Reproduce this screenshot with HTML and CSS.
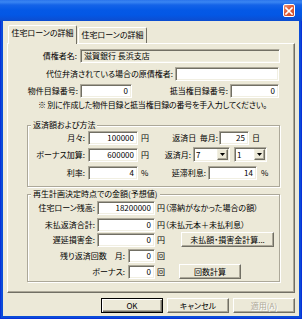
FILE: index.html
```html
<!DOCTYPE html>
<html lang="ja">
<head>
<meta charset="utf-8">
<title>住宅ローンの詳細</title>
<link rel="stylesheet" href="styles.css">
</head>
<body>
<div class="window">
  <div class="titlebar">
    <span class="close"><svg width="8" height="8" viewBox="0 0 8 8"><path d="M1 1L7 7M7 1L1 7" stroke="#fff" stroke-width="1.6" stroke-linecap="square"/></svg></span>
  </div>
  <div class="client">
    <div class="tabs">
      <div class="tab active">住宅ローンの詳細</div>
      <div class="tab">住宅ローンの詳細</div>
    </div>
    <div class="panel">
      <div class="row r1">
        <span class="lbl w69">債権者名:</span>
        <span class="edit ro ml3 w200">滋賀銀行 長浜支店</span>
      </div>
      <div class="row r2">
        <span class="lbl w165">代位弁済されている場合の原債権者:</span>
        <span class="edit ml2 w104"></span>
      </div>
      <div class="row r3">
        <span class="lbl w70">物件目録番号:</span>
        <span class="edit num ml2 w52">0</span>
        <span class="lbl w96">抵当権目録番号:</span>
        <span class="edit num ml2 w49">0</span>
      </div>
      <p class="note">※ 別に作成した物件目録と抵当権目録の番号を手入力してください。</p>

      <fieldset class="group g1">
        <legend>返済額および方法</legend>
        <div class="row">
          <span class="lbl w57">月々:</span>
          <span class="edit num ml3 w50">100000</span>
          <span class="unit">円</span>
          <span class="lbl w68">返済日&nbsp;&nbsp;毎月:</span>
          <span class="edit num ml1 w30">25</span>
          <span class="unit">日</span>
        </div>
        <div class="row gr2">
          <span class="lbl w57">ボーナス加算:</span>
          <span class="edit num ml3 w50">600000</span>
          <span class="unit">円</span>
          <span class="lbl w41">返済月:</span>
          <span class="combo ml2 w37"><span class="cval">7</span><span class="drop"><svg width="5" height="3" viewBox="0 0 5 3"><path d="M0 0H5L2.5 3Z" fill="#000"/></svg></span></span>
          <span class="combo ml4 w33"><span class="cval">1</span><span class="drop"><svg width="5" height="3" viewBox="0 0 5 3"><path d="M0 0H5L2.5 3Z" fill="#000"/></svg></span></span>
        </div>
        <div class="row gr3">
          <span class="lbl w57">利率:</span>
          <span class="edit num ml3 w50">4</span>
          <span class="unit">%</span>
          <span class="lbl w56">延滞利息:</span>
          <span class="edit num ml2 w49">14</span>
          <span class="unit ml4">%</span>
        </div>
      </fieldset>

      <fieldset class="group g2">
        <legend>再生計画決定時点での金額(予想値)</legend>
        <div class="row hr1">
          <span class="lbl w67">住宅ローン残高:</span>
          <span class="edit num ml2 w58">18200000</span>
          <span class="txt">円（滞納がなかった場合の額）</span>
        </div>
        <div class="row hr2">
          <span class="lbl w67">未払返済合計:</span>
          <span class="edit num ml2 w58">0</span>
          <span class="txt">円（未払元本＋未払利息）</span>
        </div>
        <div class="row hr3">
          <span class="lbl w67">遅延損害金:</span>
          <span class="edit num ml2 w58">0</span>
          <span class="txt">円</span>
          <button class="btn b-calc">未払額・損害金計算...</button>
        </div>
        <div class="row hr4">
          <span class="lbl w97">残り返済回数　月:</span>
          <span class="edit num ml3 w27">0</span>
          <span class="txt">回</span>
        </div>
        <div class="row hr5">
          <span class="lbl w97">ボーナス:</span>
          <span class="edit num ml3 w27">0</span>
          <span class="txt">回</span>
          <button class="btn b-count">回数計算</button>
        </div>
      </fieldset>
    </div>
    <div class="buttons">
      <button class="btn dlg default">OK</button>
      <button class="btn dlg">キャンセル</button>
      <button class="btn dlg disabled">適用(A)</button>
    </div>
  </div>
</div>
</body>
</html>
```

FILE: styles.css
```css
html, body {
  margin: 0;
  padding: 0;
  background: #ECE9D8;
}
body {
  font-family: "Noto Sans CJK JP", "Noto Sans", sans-serif;
  font-size: 8px;
  color: #000;
  font-feature-settings: "palt";
}
.window {
  width: 302px;
  height: 319px;
  display: flex;
  flex-direction: column;
  background: #0A4BD9;
  box-shadow: inset 1px 0 0 #0831D9, inset -1px 0 0 #0831D9, inset 0 -1px 0 #0831D9;
}
.titlebar {
  height: 21px;
  flex: none;
  box-sizing: border-box;
  display: flex;
  justify-content: flex-end;
  align-items: flex-start;
  padding: 4px 7px 0 0;
  background: linear-gradient(180deg, #2B74EC 0, #3A85F2 2px, #1463E8 5px, #0559E6 10px, #0357E5 15px, #0A50D6 19px, #0A4BD0 21px);
}
.close {
  width: 12px;
  height: 13px;
  box-sizing: border-box;
  border: 1px solid #fff;
  border-radius: 2px;
  background: linear-gradient(135deg, #F09A7C 0, #E2623E 40%, #CC4A24 100%);
  display: flex;
  align-items: center;
  justify-content: center;
}
.close svg { display: block; }
.client {
  flex: 1;
  margin: 0 3px 3px;
  background: #ECE9D8;
  padding: 4px 4px 0;
  display: flex;
  flex-direction: column;
}
.tabs {
  display: flex;
  align-items: flex-end;
  height: 18px;
  flex: none;
}
.tab {
  box-sizing: border-box;
  width: 69px;
  height: 16px;
  line-height: 14px;
  text-align: center;
  border: 1px solid;
  border-bottom: none;
  border-color: #fff #716F64 transparent #fff;
  border-radius: 2px 2px 0 0;
  background: #ECE9D8;
  white-space: nowrap;
}
.tab.active {
  margin-left: 1px;
  margin-right: 1px;
  width: 69px;
  height: 19px;
  line-height: 14px;
  margin-bottom: -1px;
  position: relative;
  z-index: 1;
}
.panel {
  box-sizing: border-box;
  height: 250px;
  flex: none;
  border: 1px solid;
  border-color: #fff #716F64 #716F64 #fff;
  box-shadow: inset -1px -1px 0 #ACA899;
  display: flex;
  flex-direction: column;
}
.row {
  display: flex;
  align-items: center;
  height: 15px;
  flex: none;
  white-space: nowrap;
}
.r1 { margin-top: 4px; }
.r2 { margin-top: 3px; }
.r3 { margin-top: 2px; }
.note {
  margin: 2px 0 0;
  padding-left: 30px;
  line-height: 10px;
  letter-spacing: -0.22px;
  white-space: nowrap;
}
.lbl {
  text-align: right;
  flex: none;
}
.edit {
  box-sizing: border-box;
  height: 14px;
  line-height: 12px;
  background: #fff;
  border: 1px solid;
  border-color: #ACA899 #fff #fff #ACA899;
  box-shadow: inset 1px 1px 0 #716F64, inset -1px -1px 0 #F1EFE2;
  padding: 0 3px;
  flex: none;
  overflow: hidden;
}
.edit.num { text-align: right; }
.edit.ro { background: #ECE9D8; text-align: left; }
.unit { margin-left: 3px; width: 9px; flex: none; }
.unit.ml4 { margin-left: 4px; }
.txt { margin-left: 2px; }

.w27 { width: 27px; } .w30 { width: 30px; } .w33 { width: 33px; }
.w37 { width: 37px; } .w41 { width: 41px; } .w49 { width: 49px; }
.w50 { width: 50px; } .w52 { width: 52px; } .w56 { width: 56px; }
.w57 { width: 57px; } .w58 { width: 58px; } .w67 { width: 67px; }
.w68 { width: 68px; } .w69 { width: 69px; } .w70 { width: 70px; }
.w96 { width: 96px; } .w97 { width: 97px; } .w104 { width: 104px; }
.w165 { width: 165px; } .w200 { width: 200px; }
.ml1 { margin-left: 1px; } .ml2 { margin-left: 2px; }
.ml3 { margin-left: 3px; } .ml4 { margin-left: 4px; }

.group {
  box-sizing: border-box;
  width: 253px;
  margin: 0 0 0 19px;
  padding: 0;
  border: 1px solid #ACA899;
  box-shadow: 1px 1px 0 #fff, inset 1px 1px 0 #fff;
  min-width: 0;
}
.group legend {
  margin-left: 3px;
  padding: 0 2px;
  line-height: 10px;
  background: #ECE9D8;
}
.g1 { margin-top: 10px; padding-bottom: 6px; }
.g2 { margin-top: 2px; padding-bottom: 2px; }
.gr2 { margin-top: 2px; }
.gr3 { margin-top: 3px; }
.hr1 { margin-top: 1px; }
.hr2 { margin-top: 2px; }
.hr4 { margin-top: 1px; }
.hr5 { margin-top: 1px; }

.combo {
  box-sizing: border-box;
  height: 15px;
  display: flex;
  align-items: stretch;
  background: #fff;
  border: 1px solid;
  border-color: #ACA899 #fff #fff #ACA899;
  box-shadow: inset 1px 1px 0 #716F64, inset -1px -1px 0 #F1EFE2;
  padding: 1px;
  flex: none;
}
.cval {
  flex: 1;
  line-height: 11px;
  padding-left: 1px;
}
.drop {
  box-sizing: border-box;
  width: 11px;
  background: #ECE9D8;
  border: 1px solid;
  border-color: #F1EFE2 #716F64 #716F64 #F1EFE2;
  box-shadow: inset -1px -1px 0 #ACA899;
  display: flex;
  align-items: center;
  justify-content: center;
}
.drop svg { display: block; }

.btn {
  box-sizing: border-box;
  height: 15px;
  padding: 0;
  font: inherit;
  font-feature-settings: "palt";
  line-height: 11px;
  color: #000;
  background: #ECE9D8;
  border: 1px solid;
  border-color: #fff #716F64 #716F64 #fff;
  box-shadow: inset -1px -1px 0 #ACA899;
  flex: none;
  white-space: nowrap;
}
.b-calc { margin-left: 16px; width: 93px; }
.b-count { margin-left: 14px; width: 62px; }
.buttons {
  display: flex;
  justify-content: flex-end;
  gap: 4px;
  margin-top: 5px;
}
.btn.dlg { width: 62px; }
.btn.default {
  border-color: #000;
  box-shadow: inset 1px 1px 0 #fff, inset -1px -1px 0 #716F64, inset -2px -2px 0 #ACA899;
}
.btn.disabled {
  color: #ACA899;
  text-shadow: 1px 1px 0 #fff;
}
```
